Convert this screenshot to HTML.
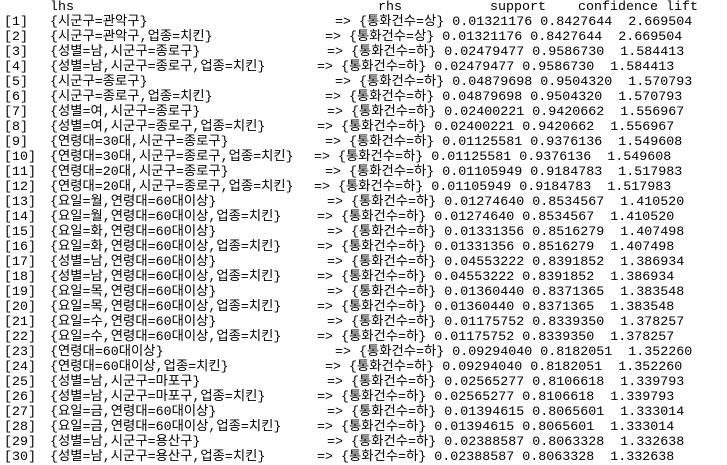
<!DOCTYPE html>
<html><head><meta charset="utf-8"><style>
body{margin:0;background:#fff;width:727px;height:465px;overflow:hidden;position:relative;font-family:"Liberation Mono","Noto Sans CJK KR",monospace;font-size:13.33px;color:#000;}
div{position:absolute;left:0;height:15px;line-height:15px;white-space:pre;width:727px}
span{position:absolute;top:0}
i{font-style:normal;font-family:"Liberation Mono",monospace}
.n{left:4px}.l{left:50px}
</style></head><body>
<div style="top:0px"><span class="l">lhs</span><span style="left:378px">rhs</span><span style="left:490px">support</span><span style="left:578px">confidence lift</span></div>
<div style="top:15px"><span class="n">[1]</span><span class="l">{시군구=관악구}</span><span style="left:335px">=&gt; {통화건수=상} 0.01321176 0.8427644  2.669504</span></div>
<div style="top:30px"><span class="n">[2]</span><span class="l">{시군구=관악구<i>,</i>업종=치킨}</span><span style="left:325px">=&gt; {통화건수=상} 0.01321176 0.8427644  2.669504</span></div>
<div style="top:45px"><span class="n">[3]</span><span class="l">{성별=남<i>,</i>시군구=종로구}</span><span style="left:327px">=&gt; {통화건수=하} 0.02479477 0.9586730  1.584413</span></div>
<div style="top:60px"><span class="n">[4]</span><span class="l">{성별=남<i>,</i>시군구=종로구<i>,</i>업종=치킨}</span><span style="left:317px">=&gt; {통화건수=하} 0.02479477 0.9586730  1.584413</span></div>
<div style="top:75px"><span class="n">[5]</span><span class="l">{시군구=종로구}</span><span style="left:335px">=&gt; {통화건수=하} 0.04879698 0.9504320  1.570793</span></div>
<div style="top:90px"><span class="n">[6]</span><span class="l">{시군구=종로구<i>,</i>업종=치킨}</span><span style="left:325px">=&gt; {통화건수=하} 0.04879698 0.9504320  1.570793</span></div>
<div style="top:105px"><span class="n">[7]</span><span class="l">{성별=여<i>,</i>시군구=종로구}</span><span style="left:327px">=&gt; {통화건수=하} 0.02400221 0.9420662  1.556967</span></div>
<div style="top:120px"><span class="n">[8]</span><span class="l">{성별=여<i>,</i>시군구=종로구<i>,</i>업종=치킨}</span><span style="left:317px">=&gt; {통화건수=하} 0.02400221 0.9420662  1.556967</span></div>
<div style="top:135px"><span class="n">[9]</span><span class="l">{연령대=30대<i>,</i>시군구=종로구}</span><span style="left:325px">=&gt; {통화건수=하} 0.01125581 0.9376136  1.549608</span></div>
<div style="top:150px"><span class="n">[10]</span><span class="l">{연령대=30대<i>,</i>시군구=종로구<i>,</i>업종=치킨}</span><span style="left:314px">=&gt; {통화건수=하} 0.01125581 0.9376136  1.549608</span></div>
<div style="top:165px"><span class="n">[11]</span><span class="l">{연령대=20대<i>,</i>시군구=종로구}</span><span style="left:325px">=&gt; {통화건수=하} 0.01105949 0.9184783  1.517983</span></div>
<div style="top:180px"><span class="n">[12]</span><span class="l">{연령대=20대<i>,</i>시군구=종로구<i>,</i>업종=치킨}</span><span style="left:314px">=&gt; {통화건수=하} 0.01105949 0.9184783  1.517983</span></div>
<div style="top:195px"><span class="n">[13]</span><span class="l">{요일=월<i>,</i>연령대=60대이상}</span><span style="left:327px">=&gt; {통화건수=하} 0.01274640 0.8534567  1.410520</span></div>
<div style="top:210px"><span class="n">[14]</span><span class="l">{요일=월<i>,</i>연령대=60대이상<i>,</i>업종=치킨}</span><span style="left:317px">=&gt; {통화건수=하} 0.01274640 0.8534567  1.410520</span></div>
<div style="top:225px"><span class="n">[15]</span><span class="l">{요일=화<i>,</i>연령대=60대이상}</span><span style="left:327px">=&gt; {통화건수=하} 0.01331356 0.8516279  1.407498</span></div>
<div style="top:240px"><span class="n">[16]</span><span class="l">{요일=화<i>,</i>연령대=60대이상<i>,</i>업종=치킨}</span><span style="left:317px">=&gt; {통화건수=하} 0.01331356 0.8516279  1.407498</span></div>
<div style="top:255px"><span class="n">[17]</span><span class="l">{성별=남<i>,</i>연령대=60대이상}</span><span style="left:327px">=&gt; {통화건수=하} 0.04553222 0.8391852  1.386934</span></div>
<div style="top:270px"><span class="n">[18]</span><span class="l">{성별=남<i>,</i>연령대=60대이상<i>,</i>업종=치킨}</span><span style="left:317px">=&gt; {통화건수=하} 0.04553222 0.8391852  1.386934</span></div>
<div style="top:285px"><span class="n">[19]</span><span class="l">{요일=목<i>,</i>연령대=60대이상}</span><span style="left:327px">=&gt; {통화건수=하} 0.01360440 0.8371365  1.383548</span></div>
<div style="top:300px"><span class="n">[20]</span><span class="l">{요일=목<i>,</i>연령대=60대이상<i>,</i>업종=치킨}</span><span style="left:317px">=&gt; {통화건수=하} 0.01360440 0.8371365  1.383548</span></div>
<div style="top:315px"><span class="n">[21]</span><span class="l">{요일=수<i>,</i>연령대=60대이상}</span><span style="left:327px">=&gt; {통화건수=하} 0.01175752 0.8339350  1.378257</span></div>
<div style="top:330px"><span class="n">[22]</span><span class="l">{요일=수<i>,</i>연령대=60대이상<i>,</i>업종=치킨}</span><span style="left:317px">=&gt; {통화건수=하} 0.01175752 0.8339350  1.378257</span></div>
<div style="top:345px"><span class="n">[23]</span><span class="l">{연령대=60대이상}</span><span style="left:335px">=&gt; {통화건수=하} 0.09294040 0.8182051  1.352260</span></div>
<div style="top:360px"><span class="n">[24]</span><span class="l">{연령대=60대이상<i>,</i>업종=치킨}</span><span style="left:325px">=&gt; {통화건수=하} 0.09294040 0.8182051  1.352260</span></div>
<div style="top:375px"><span class="n">[25]</span><span class="l">{성별=남<i>,</i>시군구=마포구}</span><span style="left:327px">=&gt; {통화건수=하} 0.02565277 0.8106618  1.339793</span></div>
<div style="top:390px"><span class="n">[26]</span><span class="l">{성별=남<i>,</i>시군구=마포구<i>,</i>업종=치킨}</span><span style="left:317px">=&gt; {통화건수=하} 0.02565277 0.8106618  1.339793</span></div>
<div style="top:405px"><span class="n">[27]</span><span class="l">{요일=금<i>,</i>연령대=60대이상}</span><span style="left:327px">=&gt; {통화건수=하} 0.01394615 0.8065601  1.333014</span></div>
<div style="top:420px"><span class="n">[28]</span><span class="l">{요일=금<i>,</i>연령대=60대이상<i>,</i>업종=치킨}</span><span style="left:317px">=&gt; {통화건수=하} 0.01394615 0.8065601  1.333014</span></div>
<div style="top:435px"><span class="n">[29]</span><span class="l">{성별=남<i>,</i>시군구=용산구}</span><span style="left:327px">=&gt; {통화건수=하} 0.02388587 0.8063328  1.332638</span></div>
<div style="top:450px"><span class="n">[30]</span><span class="l">{성별=남<i>,</i>시군구=용산구<i>,</i>업종=치킨}</span><span style="left:317px">=&gt; {통화건수=하} 0.02388587 0.8063328  1.332638</span></div>
</body></html>
